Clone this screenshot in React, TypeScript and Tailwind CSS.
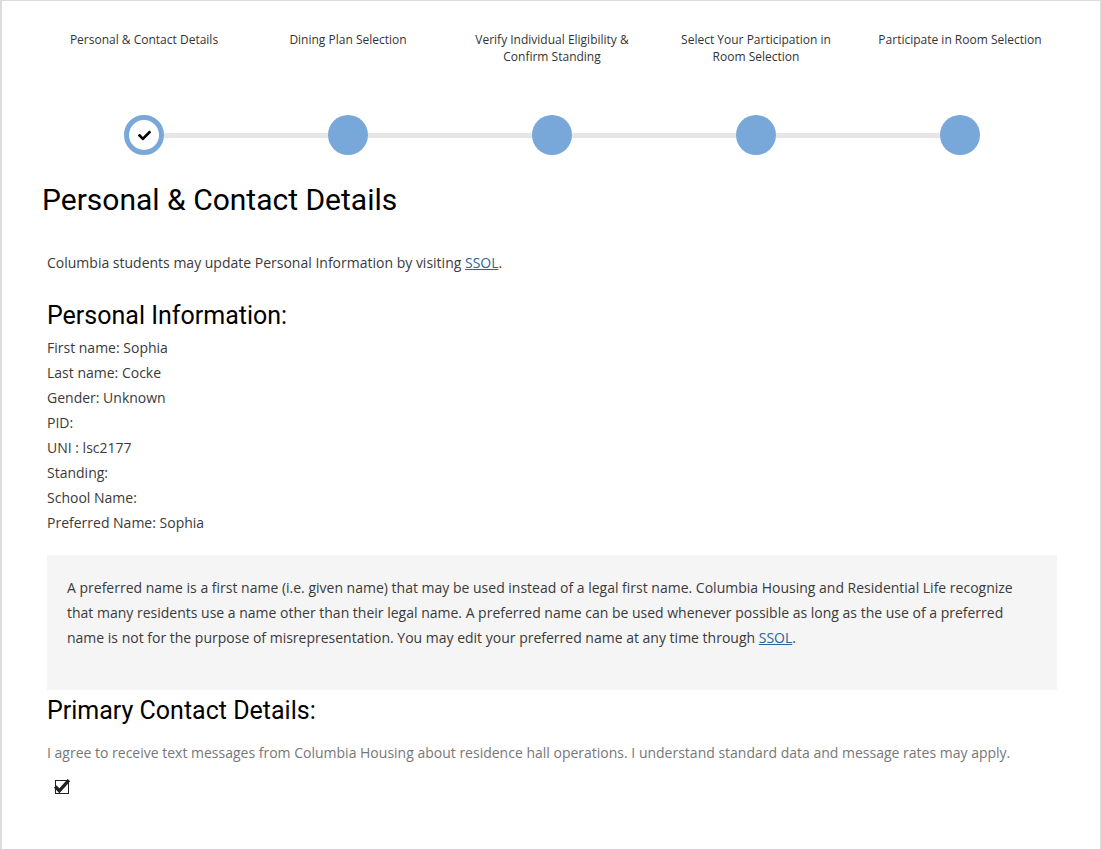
import React from "react";

const steps = [
  ["Personal & Contact Details"],
  ["Dining Plan Selection"],
  ["Verify Individual Eligibility &", "Confirm Standing"],
  ["Select Your Participation in", "Room Selection"],
  ["Participate in Room Selection"],
];

const info = [
  "First name: Sophia",
  "Last name: Cocke",
  "Gender: Unknown",
  "PID:",
  "UNI : lsc2177",
  "Standing:",
  "School Name:",
  "Preferred Name: Sophia",
];

function Check({ className }: { className?: string }) {
  return (
    <svg viewBox="0 0 512 512" className={className} fill="currentColor">
      <path d="M173.9 439.4l-166.4-166.4c-10-10-10-26.2 0-36.2l36.2-36.2c10-10 26.2-10 36.2 0L192 312.7 432.1 72.6c10-10 26.2-10 36.2 0l36.2 36.2c10 10 10 26.2 0 36.2l-294.4 294.4c-10 10-26.2 10-36.2 0z" />
    </svg>
  );
}

export default function App() {
  return (
    <div
      className="min-h-screen bg-white border-l-2 border-t border-r border-[#dcdcdc]"
      style={{ fontFamily: "'Open Sans', 'Liberation Sans', sans-serif" }}
    >
      {/* Stepper */}
      <div className="ml-[40px] w-[1020px] pt-[30px] grid grid-cols-5">
        {steps.map((lines, i) => (
          <div key={i} className="flex flex-col items-center">
            <div className="h-[34px] text-[12px] leading-[17px] text-[#333] text-center">
              {lines.map((l, j) => (
                <div key={j}>{l}</div>
              ))}
            </div>
            <div className="mt-[50px] w-full flex items-center">
              <div className={`flex-1 h-[5px] ${i === 0 ? "bg-transparent" : "bg-[#e6e6e6]"}`} />
              {i === 0 ? (
                <div className="w-[40px] h-[40px] rounded-full bg-white border-[5px] border-[#77a8d9] flex items-center justify-center">
                  <Check className="w-[13px] h-[13px] text-black" />
                </div>
              ) : (
                <div className="w-[40px] h-[40px] rounded-full bg-[#77a8d9]" />
              )}
              <div className={`flex-1 h-[5px] ${i === 4 ? "bg-transparent" : "bg-[#e6e6e6]"}`} />
            </div>
          </div>
        ))}
      </div>

      {/* Heading */}
      <h1
        className="ml-[40px] mt-[27px] text-[30px] leading-[36px] text-black"
        style={{ fontFamily: "Roboto, 'Liberation Sans', sans-serif" }}
      >
        Personal &amp; Contact Details
      </h1>

      <div className="ml-[45px] w-[1010px] text-[14px] text-[#3a3a3a]">
        <p className="mt-[35px] leading-[20px]">
          Columbia students may update Personal Information by visiting{" "}
          <a href="#" className="text-[#2a6496] underline">SSOL</a>.
        </p>

        <h2
          className="mt-[28px] text-[25px] leading-[29px] text-black"
          style={{ fontFamily: "Roboto, 'Liberation Sans', sans-serif" }}
        >
          Personal Information:
        </h2>
        <div className="mt-[5px] leading-[25px]">
          {info.map((t) => (
            <div key={t}>{t}</div>
          ))}
        </div>

        <div className="mt-[20px] bg-[#f5f5f5] pt-[20px] pb-[40px] px-[20px] leading-[25px]">
          A preferred name is a first name (i.e. given name) that may be used instead of a legal first name. Columbia Housing and Residential Life recognize that many residents use a name other than their legal name. A preferred name can be used whenever possible as long as the use of a preferred name is not for the purpose of misrepresentation. You may edit your preferred name at any time through{" "}
          <a href="#" className="text-[#2a6496] underline">SSOL</a>.
        </div>

        <h2
          className="mt-[6px] text-[25px] leading-[29px] text-black"
          style={{ fontFamily: "Roboto, 'Liberation Sans', sans-serif" }}
        >
          Primary Contact Details:
        </h2>
        <p className="mt-[18px] leading-[20px] text-[#777]">
          I agree to receive text messages from Columbia Housing about residence hall operations. I understand standard data and message rates may apply.
        </p>
        <div className="mt-[17px] ml-[8px] relative w-[14px] h-[14px] border-[1.5px] border-[#222]">
          <svg viewBox="0 0 16 16" className="absolute -left-[4px] -top-[4px] w-[19px] h-[17px]">
            <path d="M2 9 L6 13 L15 3" stroke="#222" strokeWidth="3.2" fill="none" />
          </svg>
        </div>
      </div>
    </div>
  );
}
